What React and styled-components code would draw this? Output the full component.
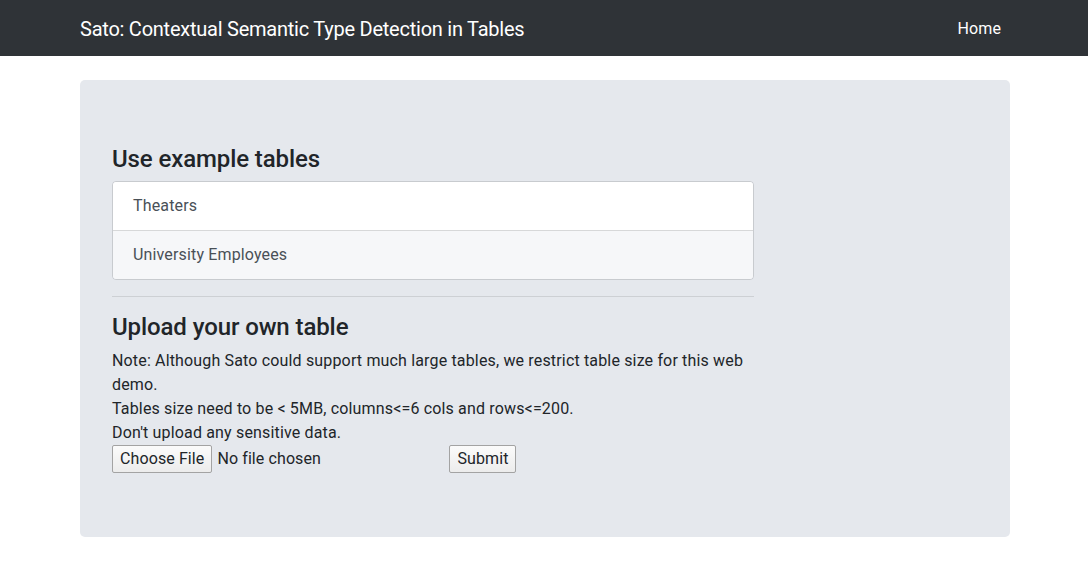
import React from 'react';
import styled, { createGlobalStyle } from 'styled-components';

const GlobalStyle = createGlobalStyle`
  * {
    box-sizing: border-box;
  }
  body {
    margin: 0;
    font-family: Roboto, "Noto Sans", "Liberation Sans", sans-serif;
    font-size: 16px;
    line-height: 1.5;
    color: #212529;
    background: #fff;
  }
`;

const Navbar = styled.nav`
  background-color: #2f3337;
  height: 56px;
  display: flex;
  align-items: center;
`;

const NavContainer = styled.div`
  width: 960px;
  margin: 0 auto;
  padding: 1px 15px 0 16px;
  display: flex;
  align-items: center;
  justify-content: space-between;
`;

const Brand = styled.a`
  color: #fff;
  font-size: 20px;
  line-height: 30px;
  letter-spacing: -0.24px;
  text-decoration: none;
`;

const NavLink = styled.a`
  color: #fff;
  font-size: 16px;
  padding: 8px;
  letter-spacing: 0.1px;
  text-decoration: none;
`;

const Container = styled.div`
  width: 960px;
  margin: 0 auto;
  padding: 0 14px 0 16px;
`;

const Jumbotron = styled.div`
  margin-top: 24px;
  background-color: #e5e8ed;
  border-radius: 5px;
  padding: 65px 32px 64px;
`;

const Column = styled.div`
  width: 642px;
`;

const Heading = styled.h4`
  font-size: 24px;
  font-weight: 500;
  line-height: 1.2;
  margin: 0 0 7px;
  letter-spacing: -0.1px;
`;

const ListGroup = styled.div`
  display: flex;
  flex-direction: column;
  border: 1px solid rgba(0, 0, 0, 0.125);
  border-radius: 4px;
  overflow: hidden;
`;

const ListItem = styled.a`
  display: block;
  padding: 12px 20px;
  color: #495057;
  letter-spacing: 0.15px;
  text-decoration: none;
  background-color: ${(p) => (p.$muted ? '#f6f7f9' : '#fff')};
  & + & {
    border-top: 1px solid rgba(0, 0, 0, 0.125);
  }
`;

const Divider = styled.hr`
  margin: 16px 0;
  border: 0;
  border-top: 1px solid rgba(0, 0, 0, 0.1);
`;

const Note = styled.p`
  margin: 0;
  letter-spacing: 0.16px;
`;

const Form = styled.form`
  display: flex;
  align-items: center;
  height: 28px;
`;

const NativeButton = styled.button`
  font-family: inherit;
  font-size: 16px;
  letter-spacing: 0.1px;
  color: #212529;
  height: 28px;
  padding: 0 7px;
  background: linear-gradient(#fbfbfb, #ececec);
  border: 1px solid #a3a3a3;
  border-radius: 2px;
`;

const FileName = styled.span`
  margin-left: 5px;
  letter-spacing: 0.1px;
  flex: 0 0 232px;
`;

export default function App() {
  return (
    <>
      <GlobalStyle />
      <Navbar>
        <NavContainer>
          <Brand href="#">Sato: Contextual Semantic Type Detection in Tables</Brand>
          <NavLink href="#">Home</NavLink>
        </NavContainer>
      </Navbar>
      <Container>
        <Jumbotron>
          <Column>
            <Heading>Use example tables</Heading>
            <ListGroup>
              <ListItem href="#">Theaters</ListItem>
              <ListItem href="#" $muted>
                University Employees
              </ListItem>
            </ListGroup>
            <Divider />
            <Heading>Upload your own table</Heading>
            <Note>
              Note: Although Sato could support much large tables, we restrict
              table size for this web demo.
              <br />
              Tables size need to be &lt; 5MB, columns&lt;=6 cols and rows&lt;=200.
              <br />
              Don't upload any sensitive data.
            </Note>
            <Form onSubmit={(e) => e.preventDefault()}>
              <NativeButton type="button">Choose File</NativeButton>
              <FileName>No file chosen</FileName>
              <NativeButton type="submit">Submit</NativeButton>
            </Form>
          </Column>
        </Jumbotron>
      </Container>
    </>
  );
}
